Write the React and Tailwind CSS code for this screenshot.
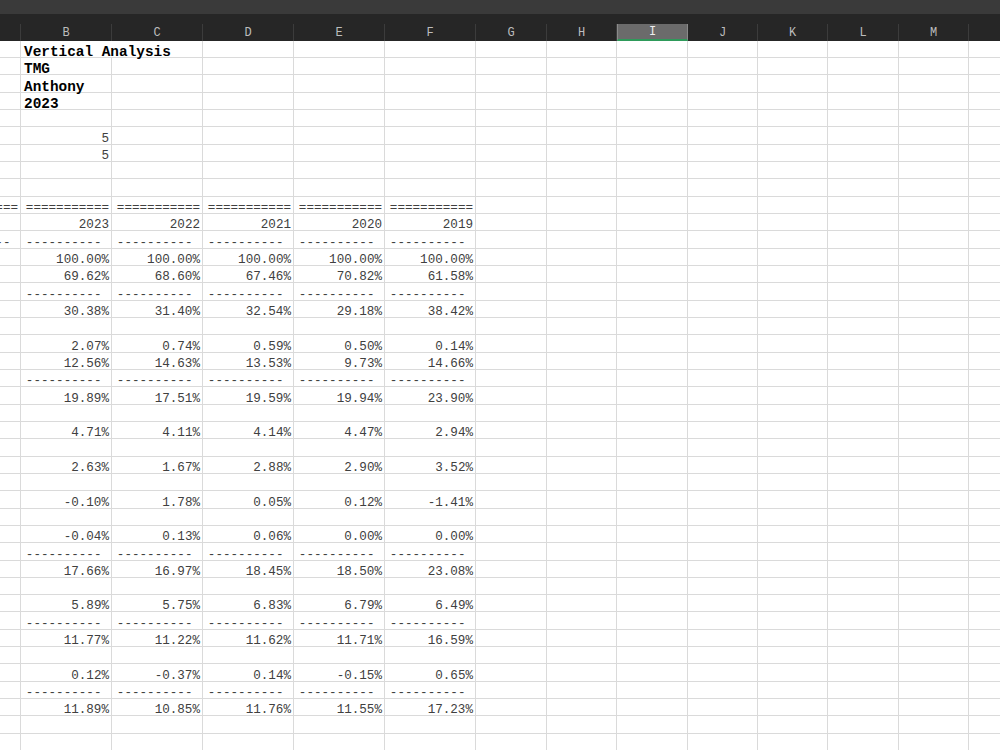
const cols = ["A", "B", "C", "D", "E", "F", "G", "H", "I", "J", "K", "L", "M", "N"]
const widths = [21, 91, 91, 91, 91, 91, 71, 70, 71, 70, 70, 71, 70, 71]

const EQ = "==========="
const DS = "---------- "
const line = (s) => [null, s, s, s, s, s]
const pct = (...v) => [null, ...v]

// sheet contents, one entry per row, columns A..F
const sheet = [
  ["title", "Vertical Analysis"],
  ["bold", "TMG"],
  ["bold", "Anthony"],
  ["bold", "2023"],
  [],
  [null, "5"],
  [null, "5"],
  [],
  [],
  [EQ, EQ, EQ, EQ, EQ, EQ],
  [null, "2023", "2022", "2021", "2020", "2019"],
  ["---------- ", DS, DS, DS, DS, DS],
  pct("100.00%", "100.00%", "100.00%", "100.00%", "100.00%"),
  pct("69.62%", "68.60%", "67.46%", "70.82%", "61.58%"),
  line(DS),
  pct("30.38%", "31.40%", "32.54%", "29.18%", "38.42%"),
  [],
  pct("2.07%", "0.74%", "0.59%", "0.50%", "0.14%"),
  pct("12.56%", "14.63%", "13.53%", "9.73%", "14.66%"),
  line(DS),
  pct("19.89%", "17.51%", "19.59%", "19.94%", "23.90%"),
  [],
  pct("4.71%", "4.11%", "4.14%", "4.47%", "2.94%"),
  [],
  pct("2.63%", "1.67%", "2.88%", "2.90%", "3.52%"),
  [],
  pct("-0.10%", "1.78%", "0.05%", "0.12%", "-1.41%"),
  [],
  pct("-0.04%", "0.13%", "0.06%", "0.00%", "0.00%"),
  line(DS),
  pct("17.66%", "16.97%", "18.45%", "18.50%", "23.08%"),
  [],
  pct("5.89%", "5.75%", "6.83%", "6.79%", "6.49%"),
  line(DS),
  pct("11.77%", "11.22%", "11.62%", "11.71%", "16.59%"),
  [],
  pct("0.12%", "-0.37%", "0.14%", "-0.15%", "0.65%"),
  line(DS),
  pct("11.89%", "10.85%", "11.76%", "11.55%", "17.23%"),
  [],
  [],
]

function HeaderRow() {
  return (
    <div className="flex h-[16.67px] bg-[#262626]">
      {cols.map((c, i) => (
        <div
          key={c}
          style={{ width: widths[i] }}
          className={
            c === "I"
              ? "shrink-0 flex items-center justify-center pt-[2px] bg-[#6b6b6b] border-x border-[#8a8a8a] border-b-2 border-b-[#2e9a5a] text-[#eeeeee] text-[12px] font-['Liberation_Mono',monospace]"
              : "shrink-0 flex items-center justify-center pt-[2px] border-r border-[#3c3c3c] text-[#bdbdbd] text-[12px] font-['Liberation_Mono',monospace]"
          }
        >
          {/* A is scrolled mostly out of view and N's label sits past the edge */}
          {c === "A" || c === "N" ? "" : c}
        </div>
      ))}
    </div>
  )
}

function Row({ cells }) {
  const kind = cells[0]
  if (kind === "title" || kind === "bold") {
    const isTitle = kind === "title"
    return (
      <div className="flex h-[17.33px]">
        <div style={{ width: widths[0] }} className="shrink-0 border-r border-b border-[#dadada]" />
        <div
          style={{ width: isTitle ? widths[1] + widths[2] : widths[1] }}
          className="shrink-0 flex items-end pl-[3px] border-r border-b border-[#dadada] whitespace-pre font-bold text-[14.4px] leading-[10px] text-black font-['Liberation_Mono',monospace]"
        >
          {cells[1]}
        </div>
        {widths.slice(isTitle ? 3 : 2).map((w, i) => (
          <div key={i} style={{ width: w }} className="shrink-0 border-r border-b border-[#dadada]" />
        ))}
      </div>
    )
  }
  return (
    <div className="flex h-[17.33px]">
      {widths.map((w, i) => (
        <div
          key={i}
          style={{ width: w }}
          className="shrink-0 flex items-end justify-end overflow-hidden pr-[2px] border-r border-b border-[#dadada] whitespace-pre text-[12.6px] leading-[9px] text-[#404040] font-['Liberation_Mono',monospace]"
        >
          {cells[i] ?? ""}
        </div>
      ))}
    </div>
  )
}

export default function App() {
  return (
    <div className="w-[1000px] h-[750px] overflow-hidden bg-white">
      <div className="h-[14px] bg-[#3a3a3a]" />
      <div className="h-[10px] bg-[#262626]" />
      <HeaderRow />
      {sheet.map((r, i) => (
        <Row key={i} cells={r} />
      ))}
    </div>
  )
}
